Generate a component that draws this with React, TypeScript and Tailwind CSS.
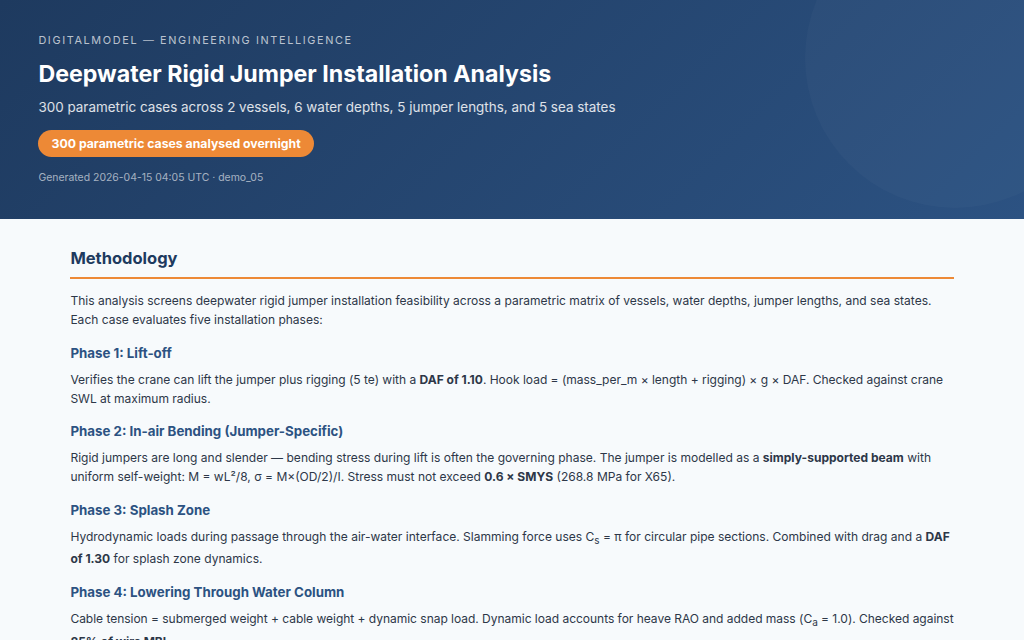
export default function App() {
  const inter = { fontFamily: "Inter, sans-serif" };

  return (
    <div style={inter} className="h-[640px] overflow-hidden bg-[#f7fafc] text-[#2d3748]">
      {/* Header */}
      <header className="relative overflow-hidden h-[219px] px-[38.4px] pt-[33px] bg-[linear-gradient(135deg,#1e3a5f_0%,#2c5282_100%)] text-white">
        <div className="absolute -top-[92px] -right-[81px] w-[300px] h-[300px] rounded-full bg-white/[0.025]" />
        <div className="relative">
          <p className="text-[10.88px] leading-[14px] tracking-[0.15em] uppercase text-white/70">
            DigitalModel — Engineering Intelligence
          </p>
          <h1 className="mt-[9px] text-[23.2px] leading-[36px] font-bold">Deepwater Rigid Jumper Installation Analysis</h1>
          <p className="mt-[5px] text-[13.44px] leading-[21px] text-white/85">
            300 parametric cases across 2 vessels, 6 water depths, 5 jumper lengths, and 5 sea states
          </p>
          <span className="inline-block mt-[12px] px-[13.2px] h-[27px] leading-[27px] rounded-full bg-[#ed8936] text-[12.25px] font-bold">
            300 parametric cases analysed overnight
          </span>
          <p className="mt-[14px] text-[10.45px] leading-[13px] text-white/60">Generated 2026-04-15 04:05 UTC · demo_05</p>
        </div>
      </header>

      {/* Main content */}
      <main className="px-[70.4px] pt-[28px] text-[12.04px] leading-[19px]">
        <h2 className="text-[16.5px] leading-[22px] font-bold text-[#1e3a5f] pb-[8px] border-b-2 border-[#ed8936]">Methodology</h2>
        <p className="mt-[12px]">
          This analysis screens deepwater rigid jumper installation feasibility across a parametric matrix of vessels, water depths, jumper lengths, and sea states. Each case evaluates five installation phases:
        </p>

        <h3 className="mt-[14px] text-[13.3px] leading-[20px] font-bold text-[#2c5282]">Phase 1: Lift-off</h3>
        <p className="mt-[7px] tracking-[-0.02px]">
          Verifies the crane can lift the jumper plus rigging (5 te) with a <strong>DAF of 1.10</strong>. Hook load = (mass_per_m × length + rigging) × g × DAF. Checked against crane SWL at maximum radius.
        </p>

        <h3 className="mt-[13px] text-[13.3px] leading-[20px] font-bold text-[#2c5282]">Phase 2: In-air Bending (Jumper-Specific)</h3>
        <p className="mt-[7px]">
          Rigid jumpers are long and slender — bending stress during lift is often the governing phase. The jumper is modelled as a <strong>simply-supported beam</strong> with uniform self-weight: M = wL²/8, σ = M×(OD/2)/I. Stress must not exceed <strong>0.6 × SMYS</strong> (268.8 MPa for X65).
        </p>

        <h3 className="mt-[14px] text-[13.3px] leading-[20px] font-bold text-[#2c5282]">Phase 3: Splash Zone</h3>
        <p className="mt-[7px]">
          Hydrodynamic loads during passage through the air-water interface. Slamming force uses C<sub className="static align-sub text-[10px] leading-[18px]">s</sub> = π for circular pipe sections. Combined with drag and a <strong>DAF of 1.30</strong> for splash zone dynamics.
        </p>

        <h3 className="mt-[14px] text-[13.3px] leading-[20px] font-bold text-[#2c5282]">Phase 4: Lowering Through Water Column</h3>
        <p className="mt-[7px] tracking-[-0.035px]">
          Cable tension = submerged weight + cable weight + dynamic snap load. Dynamic load accounts for heave RAO and added mass (C<sub className="static align-sub text-[10px] leading-[18px]">a</sub> = 1.0). Checked against <strong>85% of wire MBL</strong>.
        </p>
      </main>
    </div>
  );
}
